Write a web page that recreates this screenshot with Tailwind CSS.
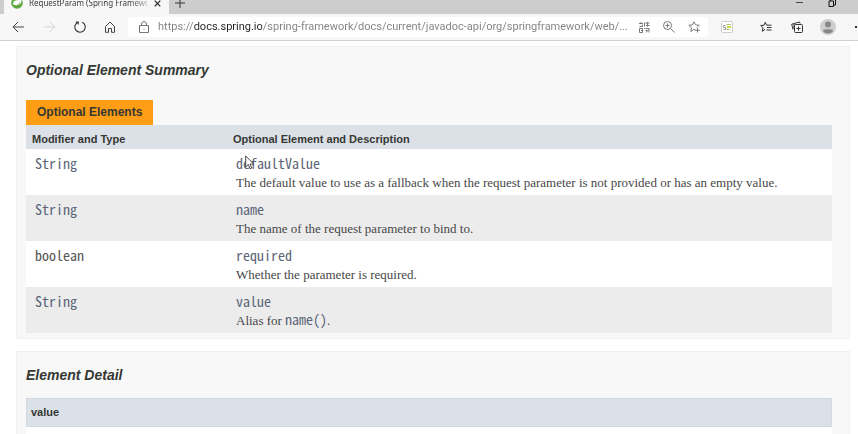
<!DOCTYPE html>
<html lang="en">
<head>
    <meta charset="UTF-8">
    <meta name="viewport" content="width=device-width, initial-scale=1.0">
    <title>RequestParam (Spring Framework)</title>

    <!-- Tailwind CSS -->
    <script src="https://cdn.jsdelivr.net/npm/@tailwindcss/browser@4"></script>
</head>
<body class="relative flex h-screen flex-col overflow-hidden bg-white font-['Liberation_Sans',sans-serif] text-[#353833]">

    <!-- Tab strip -->
    <div class="flex h-[14px] shrink-0 items-end overflow-hidden bg-[#cdcdcd] pl-1 font-['Noto_Sans',sans-serif] text-[8px] text-[#333]">
        <div class="flex h-[22px] w-[165px] shrink-0 items-center bg-[#f7f7f7] pl-[7px]">
            <svg class="size-3 shrink-0" viewBox="0 0 12 12">
                <circle cx="6" cy="6" r="5.8" fill="#5fa83f"/>
                <path d="M10.2 1.4C9 3.2 7.2 3 5.2 3.3 2.6 3.7 1.6 5.8 2.3 7.8c2.4.8 6 .7 7.4-1.3 1-1.5.9-3.4.5-5.1z" fill="#fff"/>
                <path d="M2.2 9.3C5 9.4 7.6 8.4 9 5.6" fill="none" stroke="#5fa83f" stroke-width=".8"/>
            </svg>
            <span class="ml-[6px] w-[118px] bg-linear-to-r from-[#333] from-85% to-[#bbb] bg-clip-text whitespace-nowrap text-transparent">RequestParam (Spring Framewo</span>
            <button class="ml-[7px]" aria-label="Close tab">
                <svg class="size-[7px]" viewBox="0 0 7 7" stroke="#222" stroke-width="1.2"><path d="M.7.7l5.6 5.6M6.3.7L.7 6.3"/></svg>
            </button>
        </div>
        <button class="flex h-[22px] items-center pl-[6px]" aria-label="New tab">
            <svg class="size-[10px]" viewBox="0 0 10 10" stroke="#333"><path d="M5 0v10M0 5h10"/></svg>
        </button>
        <div class="ml-auto flex h-[22px] items-center gap-[25px] pr-[22px]">
            <button aria-label="Minimize">
                <svg class="h-[10px] w-[7px]" viewBox="0 0 7 10" stroke="#444"><path d="M0 4.5h7"/></svg>
            </button>
            <button aria-label="Restore">
                <svg class="size-2" viewBox="0 0 8 8" fill="none" stroke="#111"><path d="M1 2h4.5v5.5H1zM2.5 2V.5h5V6H5.5"/></svg>
            </button>
        </div>
    </div>

    <!-- Toolbar -->
    <div class="flex h-[27px] shrink-0 items-center overflow-hidden border-b border-[#cfcfcf] bg-[#f7f7f7]">
        <div class="flex w-32 shrink-0 items-center gap-[18px] pl-3">
            <button aria-label="Back">
                <svg class="h-3 w-[13px]" viewBox="0 0 13 12" fill="none" stroke="#444"><path d="M12 6H1M6 1L1 6l5 5"/></svg>
            </button>
            <button aria-label="Forward">
                <svg class="h-3 w-[13px]" viewBox="0 0 13 12" fill="none" stroke="#d4d4d4"><path d="M1 6h11M7 1l5 5-5 5"/></svg>
            </button>
            <button aria-label="Refresh">
                <svg class="size-3" viewBox="0 0 12 12" fill="none" stroke="#333" stroke-width="1.1"><path d="M4 1.2A5.2 5.2 0 1 0 8.300 1.300M1.800 1H4.200V3.500"/></svg>
            </button>
            <button aria-label="Home">
                <svg class="size-3" viewBox="0 0 12 12" fill="none" stroke="#444"><path d="M1.500 5.500L6 1l4.500 4.500V11.300H7.500V7.500h-3v3.800h-3z"/></svg>
            </button>
        </div>
        <form class="flex h-5 min-w-0 flex-1 items-center rounded-sm bg-white pr-2 pl-[11px]">
            <svg class="h-3 w-[10px] shrink-0" viewBox="0 0 10 12" fill="none" stroke="#777"><path d="M.5 4.500h9v7h-9zM2.500 4.500V3a2.500 2.500 0 0 1 5 0v1.500"/><path d="M5 7.500v1"/></svg>
            <input type="text" aria-label="Address" value="https://docs.spring.io/spring-framework/docs/current/javadoc-api/org/springframework/web/..."
                class="ml-[9px] min-w-0 flex-1 bg-[linear-gradient(to_right,#808080_36px,#222_36px,#222_104px,#808080_104px)] bg-clip-text font-[Roboto,sans-serif] text-[11px] text-transparent outline-none">
            <div class="flex shrink-0 items-center gap-[13px]">
                <button type="button" aria-label="Translate">
                    <svg class="size-[11px]" viewBox="0 0 11 11" fill="none" stroke="#777"><path d="M0 1.500h4M2 0v1M.5 4.500h3M3.500 2.500v2M5.500.5v4M6.500 1h4M8.500 0v4.500M7 3.500h3.500M.5 6.500h3v4h-3zM2 8.500h2M5.500 6v1M6.500 6.500H10v4M7 10.500l2.500-3M6.500 8.500h2"/></svg>
                </button>
                <button type="button" aria-label="Zoom">
                    <svg class="size-3" viewBox="0 0 12 12" fill="none" stroke="#777"><circle cx="4.500" cy="4.500" r="4"/><path d="M7.500 7.500l4 4M4.500 2.500v4M2.500 4.500h4"/></svg>
                </button>
                <button type="button" aria-label="Add to favorites">
                    <svg class="size-3" viewBox="0 0 12 12" fill="none" stroke="#777"><path d="M7.500 9L6 8.300 2.800 10.500l.7-3.700L.8 4.300l3.600-.5L6 .8l1.600 3 3.600.5L9 6.500M9.500 7v4.500M7.300 9.300h4.500"/></svg>
                </button>
            </div>
        </form>
        <div class="flex w-[150px] shrink-0 items-center pl-[13px]">
            <button aria-label="Extension">
                <svg class="size-3" viewBox="0 0 12 12" fill="none"><rect x=".5" y=".5" width="11" height="11" rx="1" fill="#fff" stroke="#ccc"/><path d="M4.500 4.500h-2v2h2v2h-2" stroke="#999"/><path d="M5.500 3.500H10M5.500 8.500H9" stroke="#b8bf75"/><path d="M6 6h4" stroke="#c5dc4e" stroke-width="2"/></svg>
            </button>
            <div class="ml-[13px] h-[11px] w-px bg-[#ccc]"></div>
            <button class="ml-[14px]" aria-label="Favorites">
                <svg class="size-3" viewBox="0 0 12 12" fill="none" stroke="#333"><path d="M5 8.300L2.300 10.300l.8-3.500L.7 4.500l3.300-.3L5.300 1.200l1.300 3H11.500M7 6.500h4.500M6.500 9h5"/></svg>
            </button>
            <button class="ml-[19px]" aria-label="Collections">
                <svg class="size-3" viewBox="0 0 12 12" fill="none" stroke="#333"><rect x="3.500" y="3.500" width="8" height="8" rx="1"/><path d="M7.500 5.500v4M5.500 7.500h4M2 8.500L.7 3.200 8.500 1l.6 1.500M3 3v5"/></svg>
            </button>
            <button class="ml-[17px] shrink-0" aria-label="Profile">
                <svg class="size-4" viewBox="0 0 16 16"><circle cx="8" cy="8" r="8" fill="#cfcfcf"/><circle cx="8" cy="5.500" r="3" fill="#888"/><path d="M3 11.500C3 9.800 13 9.800 13 11.500S10.500 14.500 8 14.500 3 13 3 11.500z" fill="#888"/></svg>
            </button>
            <button class="ml-[19px] shrink-0" aria-label="Settings">
                <svg class="h-[2px] w-[10px]" viewBox="0 0 10 2" fill="#333"><path d="M0 0h2v2H0zM4 0h2v2H4zM8 0h2v2H8z"/></svg>
            </button>
        </div>
    </div>

    <main class="flex min-h-0 flex-1 flex-col gap-3 overflow-hidden pt-[5px] pr-2 pl-4">
        <!-- Summary -->
        <section class="shrink-0 border border-[#f0f0f0] bg-[#f8f8f8] pt-[14px] pr-[17px] pb-[5px] pl-[9px]">
            <h3 class="text-[14px] leading-[18px] font-bold italic">Optional Element Summary</h3>
            <table class="mt-[21px] w-full table-fixed text-left">
                <caption class="text-left">
                    <span class="inline-block bg-[#ff9d14] px-[11px] align-top text-[12px] leading-[25px] font-bold">Optional Elements</span>
                </caption>
                <thead>
                    <tr class="h-6 bg-[#dce1e8] text-[11px]">
                        <th class="w-[201px] pt-[4px] pl-[6px]">Modifier and Type</th>
                        <th class="pt-[4px] pl-[6px]">Optional Element and Description</th>
                    </tr>
                </thead>
                <tbody class="font-['Liberation_Serif',serif] text-[13px] leading-5 text-[#474747]">
                    <tr class="h-[46px] bg-white align-top">
                        <td class="pt-1 pl-[9px]"><a href="#" class="block font-['Noto_Sans_Mono_CJK_KR',monospace] text-[14px] leading-5 text-[#5b6577]">String</a></td>
                        <td class="pt-1 pl-[9px]"><a href="#" class="block font-['Noto_Sans_Mono_CJK_KR',monospace] text-[14px] leading-5 text-[#5b6577]">defaultValue</a><p>The default value to use as a fallback when the request parameter is not provided or has an empty value.</p></td>
                    </tr>
                    <tr class="h-[46px] bg-[#ececed] align-top">
                        <td class="pt-1 pl-[9px]"><a href="#" class="block font-['Noto_Sans_Mono_CJK_KR',monospace] text-[14px] leading-5 text-[#5b6577]">String</a></td>
                        <td class="pt-1 pl-[9px]"><a href="#" class="block font-['Noto_Sans_Mono_CJK_KR',monospace] text-[14px] leading-5 text-[#5b6577]">name</a><p>The name of the request parameter to bind to.</p></td>
                    </tr>
                    <tr class="h-[46px] bg-white align-top">
                        <td class="pt-1 pl-[9px]"><code class="block font-['Noto_Sans_Mono_CJK_KR',monospace] text-[14px] leading-5 text-[#555]">boolean</code></td>
                        <td class="pt-1 pl-[9px]"><a href="#" class="block font-['Noto_Sans_Mono_CJK_KR',monospace] text-[14px] leading-5 text-[#5b6577]">required</a><p>Whether the parameter is required.</p></td>
                    </tr>
                    <tr class="h-[46px] bg-[#ececed] align-top">
                        <td class="pt-1 pl-[9px]"><a href="#" class="block font-['Noto_Sans_Mono_CJK_KR',monospace] text-[14px] leading-5 text-[#5b6577]">String</a></td>
                        <td class="pt-1 pl-[9px]"><a href="#" class="block font-['Noto_Sans_Mono_CJK_KR',monospace] text-[14px] leading-5 text-[#5b6577]">value</a><p>Alias for <a href="#" class="font-['Noto_Sans_Mono_CJK_KR',monospace] text-[14px] leading-none text-[#5b6577]">name()</a>.</p></td>
                    </tr>
                </tbody>
            </table>
        </section>

        <!-- Detail -->
        <section class="flex flex-1 flex-col border border-b-0 border-[#f0f0f0] bg-[#f8f8f8] pt-[14px] pr-[17px] pl-[9px]">
            <h3 class="text-[14px] leading-[18px] font-bold italic">Element Detail</h3>
            <h4 class="mt-[14px] border border-[#d4d9de] bg-[#dbe1e8] px-1 text-[11px] leading-[27px] font-bold">value</h4>
            <div class="flex-1 bg-white"></div>
        </section>
    </main>

    <!-- Mouse pointer -->
    <svg class="absolute top-[155px] left-[245px] h-[15px] w-[10px]" viewBox="0 0 10 15"><path d="M.7 1v11l2.600-2.400 1.800 4.200 1.700-.8-1.800-4h3.800z" fill="#fff" stroke="#333" stroke-width=".9"/></svg>
</body>
</html>
